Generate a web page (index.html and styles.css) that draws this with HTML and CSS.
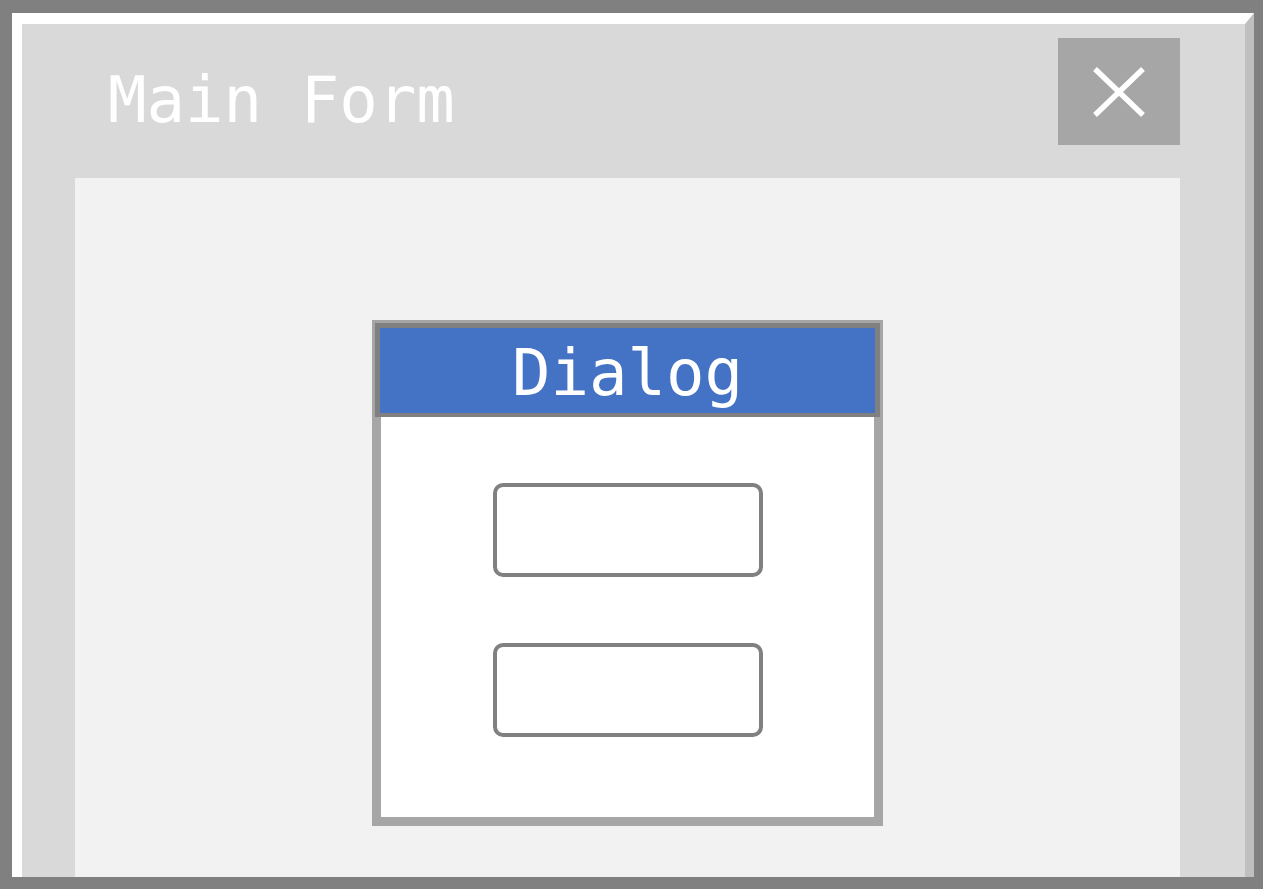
FILE: index.html
```html
<!DOCTYPE html>
<html lang="en">

  <head>
    <meta charset="UTF-8">
    <meta name="viewport" content="width=device-width, initial-scale=1.0">
    <title>Main Form</title>
    <link rel="stylesheet" href="styles.css">
  </head>

  <body>
    <div class="window">
      <div class="frame">
        <!-- title row -->
        <div class="header">
          <div class="title">Main Form</div>
          <div class="close">
            <svg width="54" height="52" viewBox="0 0 54 52">
              <path d="M3 3 L51 49 M51 3 L3 49" stroke="#fff" stroke-width="5.5" fill="none" />
            </svg>
          </div>
        </div>
        <!-- client area -->
        <div class="content">
          <div class="dialog">
            <div class="dialog_title">Dialog</div>
            <div class="dialog_body">
              <div class="field"></div>
              <div class="field"></div>
            </div>
          </div>
        </div>
      </div>
    </div>
  </body>

</html>
```

FILE: styles.css
```css
* {
  margin: 0;
  padding: 0;
  box-sizing: border-box;
}

body {
  background-color: #fff;
  font-family: "DejaVu Sans Mono", "Liberation Mono", monospace;
}

.window {
  width: 1263px;
  height: 889px;
  background-color: #808080;
  padding: 13px 9px 12px 12px;
}

.frame {
  height: 100%;
  display: flex;
  flex-direction: column;
  background-color: #d9d9d9;
  border-top: 11px solid #fff;
  border-left: 10px solid #fff;
  border-right: 9px solid #bfbfbf;
  padding: 0 65px 0 53px;
}

.header {
  height: 154px;
  display: flex;
  justify-content: space-between;
  align-items: flex-start;
}

.title {
  margin-top: 44px;
  margin-left: 33px;
  font-size: 64px;
  line-height: 64px;
  color: #fff;
}

.close {
  width: 122px;
  height: 107px;
  margin-top: 14px;
  background-color: #a6a6a6;
  display: flex;
  justify-content: center;
  align-items: center;
}

.content {
  flex: 1;
  display: flex;
  justify-content: center;
  align-items: flex-start;
  padding-top: 142px;
  background-color: #f2f2f2;
}

.dialog {
  width: 511px;
  height: 506px;
  display: flex;
  flex-direction: column;
  background-color: #a6a6a6;
  padding: 3px 3px 9px;
}

.dialog_title {
  height: 94px;
  display: flex;
  justify-content: center;
  align-items: center;
  padding-top: 4px;
  background-color: #4472c4;
  border: 5px solid #808080;
  border-bottom-width: 4px;
  font-size: 64px;
  line-height: 64px;
  color: #fff;
}

.dialog_body {
  flex: 1;
  margin: 0 6px;
  padding-top: 66px;
  display: flex;
  flex-direction: column;
  align-items: center;
  gap: 66px;
  background-color: #fff;
}

.field {
  width: 270px;
  height: 94px;
  border: 4px solid #808080;
  border-radius: 10px;
  background-color: #fff;
}
```
